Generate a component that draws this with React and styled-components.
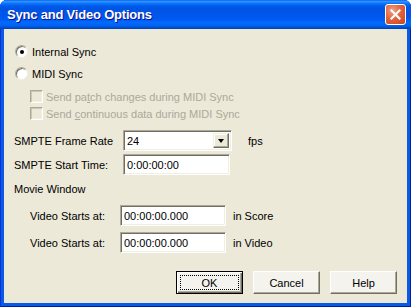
import React from "react";
import styled, { createGlobalStyle } from "styled-components";

const GlobalStyle = createGlobalStyle`
  html, body {
    margin: 0;
    padding: 0;
    background: #ffffff;
  }
  body {
    font-family: Tahoma, "Liberation Sans", Arial, sans-serif;
    font-size: 11px;
    color: #000;
  }
`;

const Window = styled.div`
  width: 411px;
  height: 307px;
  box-sizing: border-box;
  display: flex;
  flex-direction: column;
  background: #0a5ae6;
  border-radius: 7px 7px 0 0;
  box-shadow: inset 1px 0 #0831d9, inset -1px 0 #001ea0, inset 0 -1px #001ea0;
  overflow: hidden;
`;

const TitleBar = styled.div`
  height: 29px;
  flex: none;
  display: flex;
  align-items: center;
  justify-content: space-between;
  padding: 0 5px 0 7px;
  box-sizing: border-box;
  background: linear-gradient(
    to bottom,
    #0058ee 0%,
    #3593ff 4%,
    #288eff 7%,
    #127dff 10%,
    #036ffc 14%,
    #0262ee 18%,
    #0057e5 24%,
    #0054e3 30%,
    #0055eb 56%,
    #005bf5 68%,
    #026afe 78%,
    #0062ef 88%,
    #0052d6 94%,
    #0040ab 100%
  );
`;

const Title = styled.span`
  font-family: "Liberation Sans", Arial, sans-serif;
  font-weight: bold;
  font-size: 13px;
  letter-spacing: -0.2px;
  color: #fff;
  text-shadow: 1px 1px #0f1089;
  padding-bottom: 1px;
`;

const CloseBtn = styled.div`
  width: 21px;
  height: 21px;
  box-sizing: border-box;
  border: 1px solid #fff;
  border-radius: 3px;
  background: radial-gradient(circle at 35% 30%, #f0a088 0%, #e2643e 45%, #cc4418 100%);
  display: flex;
  align-items: center;
  justify-content: center;
`;

const Client = styled.div`
  flex: 1;
  margin: 0 4px 4px;
  background: #ece9d8;
  padding: 16px 10px 0;
  display: flex;
  flex-direction: column;
`;

const OptionRow = styled.label`
  display: flex;
  align-items: center;
  height: 13px;
  margin-top: ${(p) => p.$mt || 0}px;
  padding-left: ${(p) => p.$indent || 0}px;
  gap: ${(p) => p.$gap || 4}px;
  color: ${(p) => (p.$disabled ? "#aca899" : "#000")};
  white-space: nowrap;
`;

const Radio = styled.span`
  width: 13px;
  height: 13px;
  box-sizing: border-box;
  border-radius: 50%;
  background: #fff;
  border: 1px solid;
  border-color: #aca899 #f1efe2 #f1efe2 #aca899;
  box-shadow: inset 1px 1px #716f64;
  display: flex;
  align-items: center;
  justify-content: center;
  &::after {
    content: "";
    width: 4px;
    height: 4px;
    border-radius: 50%;
    background: ${(p) => (p.$checked ? "#000" : "transparent")};
    margin: 1px 0 0 1px;
  }
`;

const CheckBox = styled.span`
  width: 13px;
  height: 13px;
  box-sizing: border-box;
  background: ${(p) => (p.$disabled ? "#ece9d8" : "#fff")};
  border: 1px solid;
  border-color: #aca899 #fff #fff #aca899;
  box-shadow: inset 1px 1px #cac8bb, inset -1px -1px #f1efe2;
`;

const Underline = styled.span`
  text-decoration: underline;
`;

const FieldRow = styled.div`
  display: flex;
  align-items: center;
  height: 21px;
  margin-top: ${(p) => p.$mt || 0}px;
  padding-left: ${(p) => p.$indent || 0}px;
`;

const FieldLabel = styled.span`
  width: ${(p) => p.$w}px;
  flex: none;
  white-space: nowrap;
`;

const SunkenBox = styled.div`
  width: ${(p) => p.$w}px;
  height: 21px;
  box-sizing: border-box;
  flex: none;
  background: #fff;
  border: 1px solid;
  border-color: #aca899 #fff #fff #aca899;
  box-shadow: inset 1px 1px #716f64, inset -1px -1px #f1efe2;
  display: flex;
  align-items: center;
  padding-left: 3px;
  position: relative;
`;

const DropButton = styled.div`
  position: absolute;
  right: 2px;
  top: 2px;
  bottom: 2px;
  width: 16px;
  box-sizing: border-box;
  background: #ece9d8;
  border: 1px solid;
  border-color: #f1efe2 #716f64 #716f64 #f1efe2;
  box-shadow: inset -1px -1px #aca899, inset 1px 1px #fff;
  display: flex;
  align-items: center;
  justify-content: center;
  &::after {
    content: "";
    border-left: 3.5px solid transparent;
    border-right: 3.5px solid transparent;
    border-top: 4px solid #000;
    margin-top: 1px;
  }
`;

const Suffix = styled.span`
  margin-left: ${(p) => p.$ml}px;
  white-space: nowrap;
`;

const SectionLabel = styled.div`
  height: 13px;
  line-height: 13px;
  margin-top: ${(p) => p.$mt || 0}px;
`;

const ButtonBar = styled.div`
  display: flex;
  justify-content: flex-end;
  gap: 10px;
  margin-top: 18px;
`;

const Button = styled.button`
  width: 67px;
  height: 23px;
  box-sizing: border-box;
  font-family: inherit;
  font-size: 11px;
  color: #000;
  background: #f4f3ee;
  border: 1px solid;
  border-color: ${(p) => (p.$default ? "#000" : "#fff #716f64 #716f64 #fff")};
  box-shadow: ${(p) =>
    p.$default
      ? "inset 1px 1px #fff, inset -1px -1px #716f64, inset -2px -2px #aca899"
      : "inset -1px -1px #aca899"};
  padding: 0;
  display: flex;
  align-items: center;
  justify-content: center;
  position: relative;
`;

const FocusRing = styled.span`
  position: absolute;
  inset: 3px;
  border: 1px dotted #000;
`;

export default function App() {
  return (
    <>
      <GlobalStyle />
      <Window>
        <TitleBar>
          <Title>Sync and Video Options</Title>
          <CloseBtn>
            <svg width="11" height="11" viewBox="0 0 11 11">
              <path d="M1.5 1.5 L9.5 9.5 M9.5 1.5 L1.5 9.5" stroke="#fff" strokeWidth="2.2" strokeLinecap="square" />
            </svg>
          </CloseBtn>
        </TitleBar>
        <Client>
          <OptionRow $indent={1}>
            <Radio $checked />
            Internal Sync
          </OptionRow>
          <OptionRow $indent={1} $mt={9}>
            <Radio />
            MIDI Sync
          </OptionRow>
          <OptionRow $indent={16} $mt={10} $gap={3} $disabled>
            <CheckBox $disabled />
            <span>
              Send pa<Underline>t</Underline>ch changes during MIDI Sync
            </span>
          </OptionRow>
          <OptionRow $indent={16} $mt={4} $gap={3} $disabled>
            <CheckBox $disabled />
            <span>
              Send <Underline>c</Underline>ontinuous data during MIDI Sync
            </span>
          </OptionRow>

          <FieldRow $mt={10}>
            <FieldLabel $w={109}>SMPTE Frame Rate</FieldLabel>
            <SunkenBox $w={109}>
              24
              <DropButton />
            </SunkenBox>
            <Suffix $ml={16}>fps</Suffix>
          </FieldRow>
          <FieldRow $mt={3}>
            <FieldLabel $w={109}>SMPTE Start Time:</FieldLabel>
            <SunkenBox $w={107}>0:00:00:00</SunkenBox>
          </FieldRow>

          <SectionLabel $mt={8}>Movie Window</SectionLabel>
          <FieldRow $mt={9} $indent={16}>
            <FieldLabel $w={90}>Video Starts at:</FieldLabel>
            <SunkenBox $w={106}>00:00:00.000</SunkenBox>
            <Suffix $ml={7}>in Score</Suffix>
          </FieldRow>
          <FieldRow $mt={6} $indent={16}>
            <FieldLabel $w={90}>Video Starts at:</FieldLabel>
            <SunkenBox $w={106}>00:00:00.000</SunkenBox>
            <Suffix $ml={7}>in Video</Suffix>
          </FieldRow>

          <ButtonBar>
            <Button $default>
              <FocusRing />
              OK
            </Button>
            <Button>Cancel</Button>
            <Button>Help</Button>
          </ButtonBar>
        </Client>
      </Window>
    </>
  );
}
